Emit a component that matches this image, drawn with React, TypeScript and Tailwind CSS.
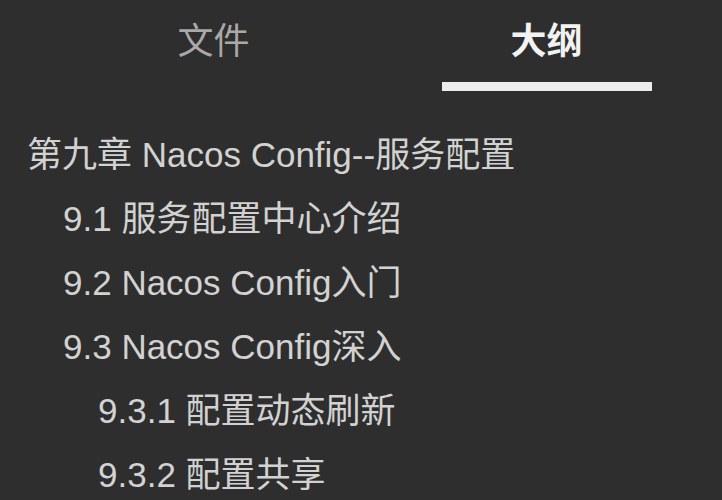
import React from 'react';

type OutlineItem = { text: string; level: 0 | 1 | 2 };

const outline: OutlineItem[] = [
  { text: '第九章 Nacos Config--服务配置', level: 0 },
  { text: '9.1 服务配置中心介绍', level: 1 },
  { text: '9.2 Nacos Config入门', level: 1 },
  { text: '9.3 Nacos Config深入', level: 1 },
  { text: '9.3.1 配置动态刷新', level: 2 },
  { text: '9.3.2 配置共享', level: 2 },
];

const indent = ['pl-[27px]', 'pl-[63px]', 'pl-[98px]'];

function Tab({ label, active }: { label: string; active?: boolean }) {
  return (
    <div className="w-[333px] flex flex-col items-center pt-[17px]">
      <span
        className={
          active
            ? 'text-[36px] leading-[50px] font-bold text-[#f2f2f2]'
            : 'text-[36px] leading-[50px] text-[#a9a9a9]'
        }
      >
        {label}
      </span>
      <div className={active ? 'mt-[15px] h-[9px] w-[210px] bg-[#ececec]' : 'mt-[15px] h-[9px] w-[210px]'} />
    </div>
  );
}

export default function App() {
  return (
    <div
      className="w-[722px] h-[500px] overflow-hidden bg-[#2e2e2e]"
      style={{ fontFamily: '"Liberation Sans", "Noto Sans CJK SC", sans-serif' }}
    >
      <div className="flex pl-[47px]">
        <Tab label="文件" />
        <Tab label="大纲" active />
      </div>

      <ul className="pt-[32px]">
        {outline.map((item) => (
          <li
            key={item.text}
            className={`h-[64px] leading-[64px] text-[35px] text-[#d2d2d2] whitespace-nowrap ${indent[item.level]}`}
          >
            {item.text}
          </li>
        ))}
      </ul>
    </div>
  );
}
